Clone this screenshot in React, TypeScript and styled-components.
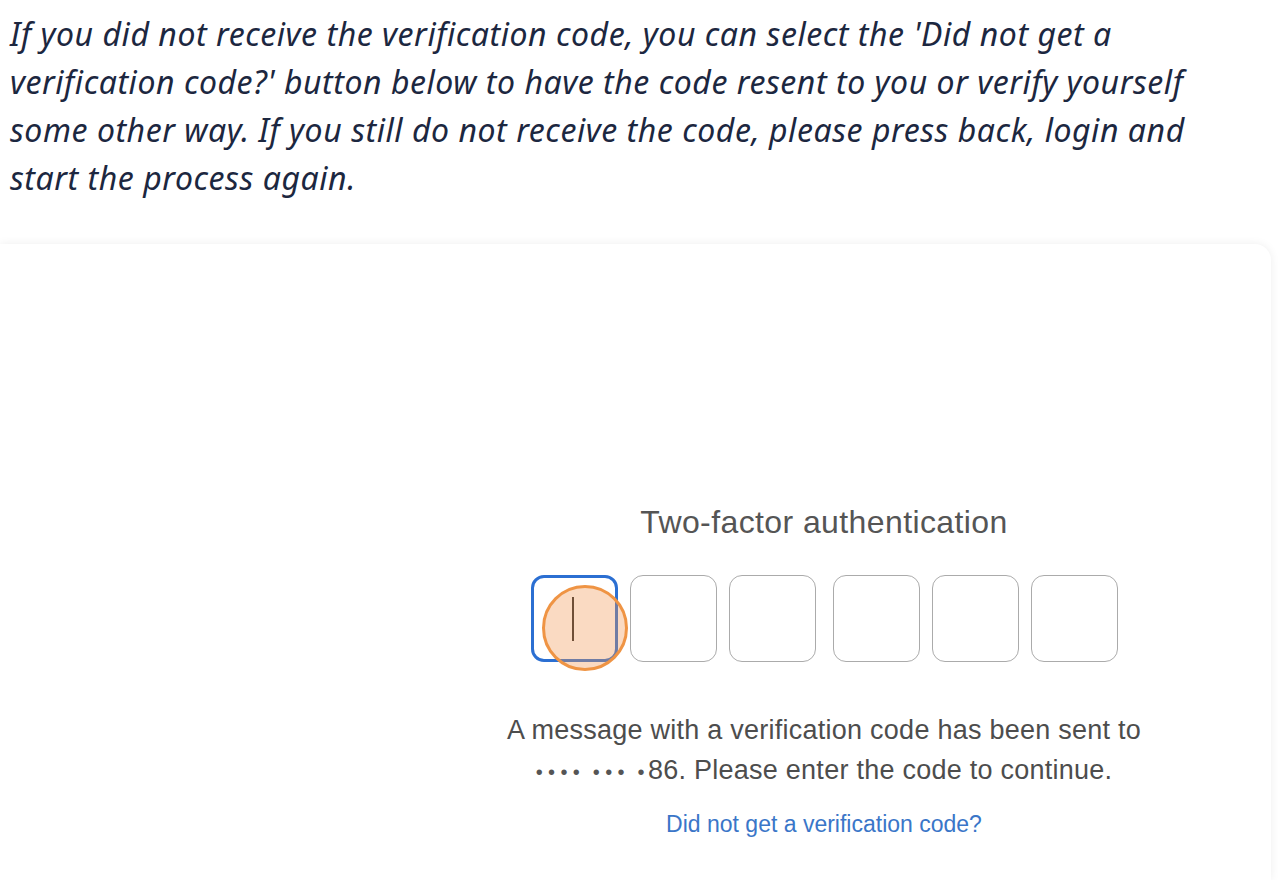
import React from "react";
import styled, { createGlobalStyle } from "styled-components";

const Global = createGlobalStyle`
  html, body { margin: 0; padding: 0; background: #ffffff; }
  body { overflow: hidden; }
  #root { width: 1288px; height: 880px; overflow: hidden; }
`;

const Page = styled.div`
  display: flex;
  flex-direction: column;
  width: 1288px;
  height: 880px;
  background: #ffffff;
`;

const Notice = styled.p`
  margin: 0;
  padding: 10px 0 0 10px;
  height: 233px;
  box-sizing: border-box;
  font-family: "Noto Sans", "Open Sans", sans-serif;
  font-style: italic;
  font-weight: 400;
  font-size: 32px;
  line-height: 48px;
  letter-spacing: 0.55px;
  color: #1c2740;
  white-space: nowrap;
`;

const Card = styled.section`
  flex: 1;
  width: 1271px;
  background: #ffffff;
  border-radius: 0 16px 0 0;
  box-shadow: 0 0 10px rgba(0, 0, 0, 0.07);
  display: flex;
  justify-content: center;
  padding: 0 0 0 377px;
  box-sizing: border-box;
  margin-top: 11px;
`;

const Form = styled.div`
  display: flex;
  flex-direction: column;
  align-items: center;
  padding-top: 259px;
  font-family: "Liberation Sans", Arial, sans-serif;
`;

const Title = styled.h2`
  margin: 0;
  font-weight: 400;
  font-size: 32px;
  line-height: 38px;
  letter-spacing: 0.4px;
  color: #555555;
`;

const CodeRow = styled.div`
  display: flex;
  gap: 17px;
  margin-top: 34px;
`;

const Group = styled.div`
  display: flex;
  gap: 12px;
`;

const Digit = styled.div<{ $active?: boolean }>`
  position: relative;
  width: 87px;
  height: 87px;
  box-sizing: border-box;
  border-radius: 13px;
  border: ${(p) => (p.$active ? "3px solid #2b6fd2" : "1.5px solid #ababab")};
  background: #ffffff;
  display: flex;
  align-items: center;
  justify-content: center;
`;

const Caret = styled.span`
  width: 2px;
  height: 44px;
  margin-left: -2px;
  background: #2a2a2a;
`;

const Touch = styled.span`
  position: absolute;
  left: 8px;
  top: 7px;
  width: 86px;
  height: 86px;
  box-sizing: border-box;
  border-radius: 50%;
  border: 3px solid #ef9444;
  background: rgba(240, 150, 80, 0.35);
`;

const Message = styled.p`
  margin: 48px 0 0;
  font-size: 27px;
  line-height: 40px;
  letter-spacing: 0.25px;
  color: #4d4d4d;
  text-align: center;
`;

const Dots = styled.span`
  font-size: 20px;
  letter-spacing: 5.4px;
  word-spacing: -3.4px;
  margin-right: -2px;
  color: #555555;
`;

const Link = styled.a`
  margin-top: 18px;
  font-size: 23px;
  line-height: 28px;
  color: #3a76c8;
  text-decoration: none;
  cursor: pointer;
`;

export default function App() {
  const digits = [0, 1, 2, 3, 4, 5];
  return (
    <>
      <Global />
      <Page>
        <Notice>
          If you did not receive the verification code, you can select the 'Did not get a
          <br />
          verification code?' button below to have the code resent to you or verify yourself
          <br />
          some other way. If you still do not receive the code, please press back, login and
          <br />
          start the process again.
        </Notice>
        <Card>
          <Form>
            <Title>Two-factor authentication</Title>
            <CodeRow>
              <Group>
                {digits.slice(0, 3).map((d) => (
                  <Digit key={d} $active={d === 0}>
                    {d === 0 && (
                      <>
                        <Caret />
                        <Touch />
                      </>
                    )}
                  </Digit>
                ))}
              </Group>
              <Group>
                {digits.slice(3).map((d) => (
                  <Digit key={d} />
                ))}
              </Group>
            </CodeRow>
            <Message>
              A message with a verification code has been sent to
              <br />
              <Dots>•••• ••• •</Dots>86. Please enter the code to continue.
            </Message>
            <Link>Did not get a verification code?</Link>
          </Form>
        </Card>
      </Page>
    </>
  );
}
